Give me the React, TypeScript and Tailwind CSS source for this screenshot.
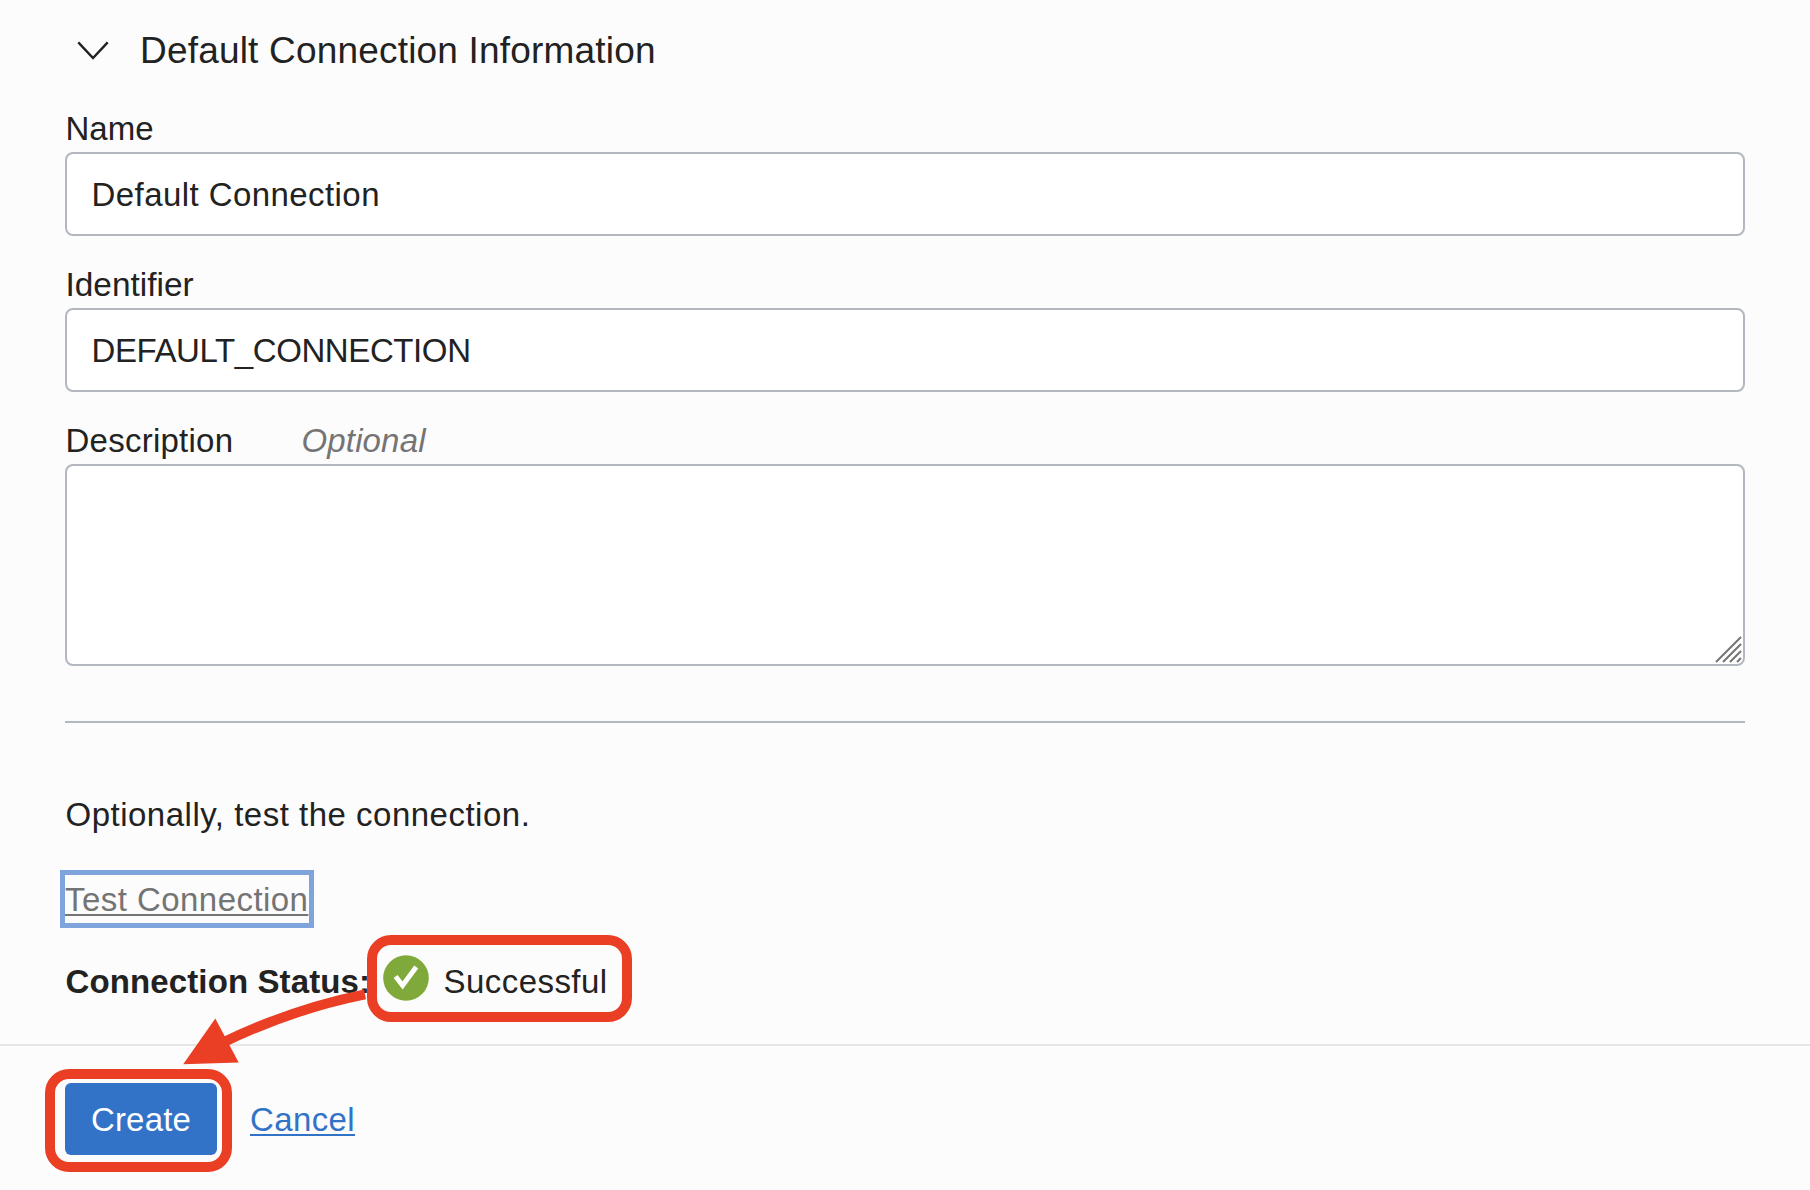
import type { ReactNode } from "react";

function Field({ label, hint, children }: { label: ReactNode; hint?: ReactNode; children: ReactNode }) {
  return (
    <div className="flex flex-col gap-[3px]">
      <div className="flex h-10 items-center pl-[0.5px] leading-10">
        {label}
        {hint}
      </div>
      {children}
    </div>
  );
}

const inputClass =
  "block h-[84px] w-full rounded-[8px] border-2 border-[#b3b8c0] bg-white pt-[2px] pl-[24.5px] text-[33px] outline-none";

export default function App() {
  return (
    <div className="relative flex h-[1190px] w-[1810px] flex-col overflow-hidden bg-[#fcfcfc] font-['Liberation_Sans',Arial,sans-serif] text-[33px] text-[#222222]">
      <main className="flex h-[1044px] flex-col pr-[65px] pl-[65px]">
        <header className="flex h-[100px] items-center gap-[31px] pl-[12px]">
          <svg className="h-[20px] w-[32px]" viewBox="0 0 32 20" fill="none" stroke="#222222" strokeWidth="2.4">
            <path d="M1.3 2.4 L16 18 L30.7 2.4" />
          </svg>
          <h1 className="pt-[2px] text-[37px] leading-[44px] tracking-[0.19px] whitespace-nowrap">
            Default Connection Information
          </h1>
        </header>

        <div className="mt-[9px] flex flex-col gap-[29px]">
          <Field label={<span>Name</span>}>
            <input className={inputClass + " tracking-[0.43px]"} defaultValue="Default Connection" />
          </Field>
          <Field label={<span className="text-[33.4px]">Identifier</span>}>
            <input className={inputClass + " tracking-[-0.4px]"} defaultValue="DEFAULT_CONNECTION" />
          </Field>
          <Field
            label={<span className="w-[236px] tracking-[0.25px]">Description</span>}
            hint={<span className="tracking-[0.15px] text-[#747474] italic">Optional</span>}
          >
            <div className="flex h-[202px] items-end justify-end rounded-[8px] border-2 border-[#b3b8c0] bg-white">
              <svg className="mr-[1px] mb-[1px] h-[27px] w-[28px]" viewBox="0 0 28 27" stroke="#747474" strokeWidth="2">
                <path d="M2 26 L27 1 M9 26 L27 8 M16 26 L27 15 M23 26 L27 22" />
              </svg>
            </div>
          </Field>
        </div>

        <hr className="mt-[55px] h-[2px] border-0 bg-[#b3b8c0]" />

        <p className="mt-[72px] pl-[0.5px] leading-10 tracking-[0.5px]">Optionally, test the connection.</p>
        <div className="mt-[35px] -ml-[5px] flex h-[58px] w-[254px] items-center border-5 border-[#7fa4dc]">
          <a className="pt-[2px] leading-[46px] tracking-[0.45px] whitespace-nowrap text-[#747474] underline decoration-2 underline-offset-[3px]">
            Test Connection
          </a>
        </div>
        <div className="mt-[7px] flex h-[87px] items-center">
          <span className="mt-[6px] w-[302px] pl-[0.5px] font-bold tracking-[0.12px] whitespace-nowrap">
            Connection Status:
          </span>
          <div className="z-20 flex h-[87px] w-[265px] items-center rounded-[24px] border-10 border-[#ea3f25] bg-[#fcfcfc] pl-[6px]">
            <svg className="-mt-[1px] h-[46px] w-[46px]" viewBox="0 0 46 46">
              <circle cx="23" cy="23" r="22.8" fill="#7fa93a" />
              <path d="M12.6 21.5 L19.6 30.4 L33.2 12" fill="none" stroke="#ffffff" strokeWidth="4.9" />
            </svg>
            <span className="mt-[6px] ml-[14.5px] tracking-[0.45px]">Successful</span>
          </div>
        </div>
      </main>

      <footer className="flex h-[146px] items-start border-t-2 border-[#e6e6e6] pt-[23px] pl-[45px]">
        <div className="flex h-[103px] w-[187px] items-start rounded-[24px] border-10 border-[#ea3f25] pt-[4px] pl-[10px]">
          <button className="h-[72px] w-[152px] rounded-[6px] bg-[#3273c8] pt-[2px] text-white">
            <span className="tracking-[0.2px]">Create</span>
          </button>
        </div>
        <a className="mt-[31px] ml-[18px] leading-10 tracking-[0.38px] text-[#3273c8] underline decoration-2 underline-offset-[3px]">
          Cancel
        </a>
      </footer>

      {/* Arrow linking the status callout to the Create button */}
      <svg className="absolute top-[980px] left-[170px] z-10 h-[100px] w-[210px]" viewBox="170 980 210 100">
        <path d="M365 994.3 Q292 1009 222 1043" fill="none" stroke="#ea3f25" strokeWidth="10" />
        <path d="M183.2 1064.2 L215.3 1018.6 L238.7 1062.6 Z" fill="#ea3f25" />
      </svg>
    </div>
  );
}
